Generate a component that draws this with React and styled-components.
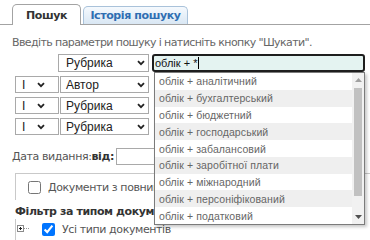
import styled, { createGlobalStyle } from "styled-components";

const GlobalStyle = createGlobalStyle`
  html, body {
    margin: 0;
    padding: 0;
    background: #fff;
  }
  body {
    font-family: "DejaVu Sans", Verdana, sans-serif;
    font-size: 11px;
    letter-spacing: -0.4px;
    overflow: hidden;
  }
`;

const Page = styled.div`
  position: relative;
  width: 370px;
  height: 240px;
  overflow: hidden;
  padding-top: 4px;
  box-sizing: border-box;
`;

const TabBar = styled.div`
  display: flex;
  align-items: flex-end;
  gap: 2px;
  height: 20px;
  padding-left: 12px;
  border-bottom: 1px solid #a3a3a3;
`;

const Tab = styled.div`
  box-sizing: border-box;
  display: flex;
  align-items: center;
  justify-content: center;
  width: ${(p) => p.$w}px;
  height: ${(p) => (p.$active ? 21 : 18)}px;
  margin-bottom: ${(p) => (p.$active ? -1 : 0)}px;
  border: 1px solid ${(p) => (p.$active ? "#a3a3a3" : "#a9c2da")};
  border-bottom: none;
  border-radius: 5px 5px 0 0;
  background: ${(p) =>
    p.$active ? "#fff" : "linear-gradient(#f5f9fd, #d9e7f4)"};
  color: ${(p) => (p.$active ? "#333" : "#2f6eb2")};
  font-weight: bold;
  font-size: 11px;
  padding-top: ${(p) => (p.$active ? 1 : 0)}px;
`;

const Hint = styled.div`
  margin: 11px 0 0 12px;
  line-height: 14px;
  letter-spacing: -0.6px;
  color: #666;
  white-space: nowrap;
`;

const Form = styled.div`
  display: flex;
  flex-direction: column;
  gap: 4px;
  margin-top: 4px;
`;

const Row = styled.div`
  display: flex;
  padding-left: 15px;
  height: ${(p) => (p.$first ? 18 : 17)}px;
`;

const Spacer = styled.div`
  width: ${(p) => p.$w}px;
  flex: none;
`;

const SelectBox = styled.div`
  box-sizing: border-box;
  display: flex;
  align-items: center;
  justify-content: space-between;
  flex: none;
  width: ${(p) => p.$w}px;
  height: 100%;
  margin-left: ${(p) => p.$ml || 0}px;
  padding: 0 ${(p) => p.$pr}px 0 ${(p) => p.$pl}px;
  border: 1px solid #a9a9a9;
  background: #fff;
  font-family: "Liberation Sans", Arial, sans-serif;
  font-size: 12px;
  letter-spacing: 0;
  color: #222;
`;

const Chevron = () => (
  <svg width="8" height="6" viewBox="0 0 8 6">
    <path d="M1 1.2 L4 4.2 L7 1.2" fill="none" stroke="#222" strokeWidth="1.8" />
  </svg>
);

const InputCell = styled.div`
  position: relative;
  flex: none;
  width: 213px;
  margin-left: 3px;
  height: 100%;
`;

const SearchInput = styled.div`
  box-sizing: border-box;
  display: flex;
  align-items: center;
  height: 100%;
  padding-left: 1px;
  border: 2px solid #1e1e1e;
  border-radius: 3px;
  background: #e4f3f1;
  font-family: "Liberation Sans", Arial, sans-serif;
  font-size: 11px;
  letter-spacing: 0;
  color: #111;
`;

const Caret = styled.span`
  display: inline-block;
  width: 1px;
  height: 12px;
  margin-left: 1px;
  background: #000;
`;

const PlainInput = styled.div`
  box-sizing: border-box;
  height: 100%;
  margin-left: 5px;
  border: 1px solid #a9a9a9;
  background: #fff;
`;

const DropList = styled.div`
  position: absolute;
  top: 100%;
  left: 2px;
  z-index: 2;
  box-sizing: border-box;
  display: flex;
  width: 211px;
  height: 153px;
  border: 1px solid #7b7b7b;
  background: #fff;
  box-shadow: 2px 2px 3px rgba(0, 0, 0, 0.22);
`;

const Items = styled.div`
  display: flex;
  flex-direction: column;
  flex: 1;
`;

const Item = styled.div`
  flex: 1;
  display: flex;
  align-items: center;
  padding-left: 4px;
  background: ${(p) => (p.$alt ? "#efefef" : "#fff")};
  font-family: "Liberation Sans", Arial, sans-serif;
  font-size: 10.5px;
  letter-spacing: 0.1px;
  color: #666;
  white-space: nowrap;
`;

const Scrollbar = styled.div`
  display: flex;
  flex-direction: column;
  align-items: center;
  width: 12px;
  background: #f1f1f1;
`;

const ScrollArrow = styled.div`
  display: flex;
  align-items: center;
  justify-content: center;
  height: 14px;
`;

const Track = styled.div`
  flex: 1;
`;

const Thumb = styled.div`
  width: 8px;
  margin-top: 1px;
  height: ${(p) => p.$h}px;
  background: #c1c1c1;
`;

const DateRow = styled.div`
  display: flex;
  align-items: center;
  height: 17px;
  margin-top: 13px;
  padding-left: 12px;
  color: #555;
`;

const Bold = styled.b`
  color: #333;
`;

const DateInput = styled.div`
  box-sizing: border-box;
  width: 200px;
  height: 17px;
  margin-left: 2px;
  border: 1px solid #a9a9a9;
`;

const Panel = styled.div`
  display: flex;
  align-items: center;
  margin: 8px 0 0 15px;
  padding: 7px 0 6px 12px;
  border-top: 1px solid #c9c9c9;
  border-left: 1px solid #c9c9c9;
  color: #555;
  white-space: nowrap;
`;

/* text that runs under the open suggestion list is cut where the list begins */
const Clip = styled.span`
  display: block;
  width: ${(p) => p.$w}px;
  overflow: hidden;
  white-space: nowrap;
`;

const Check = styled.input`
  width: 13px;
  height: 13px;
  margin: 0 ${(p) => p.$mr}px 0 ${(p) => p.$ml || 0}px;
  flex: none;
`;

const Heading = styled.div`
  margin: 5px 0 0 15px;
  line-height: 14px;
  font-weight: bold;
  color: #333;
`;

const FilterPanel = styled.div`
  display: flex;
  align-items: center;
  margin-left: 15px;
  padding: 4px 0 10px 1px;
  border-left: 1px solid #c9c9c9;
  color: #555;
  white-space: nowrap;
`;

const Expander = () => (
  <svg width="24" height="13" viewBox="0 0 24 13">
    <rect x="0.5" y="2.5" width="6" height="6" fill="#fff" stroke="#8a8a8a" />
    <path d="M2 5.5 H5 M3.5 4 V7" stroke="#222" strokeWidth="1" />
    <path d="M7 5.5 H12" stroke="#999" strokeDasharray="1 1" />
  </svg>
);

const suggestions = [
  "аналітичний",
  "бухгалтерський",
  "бюджетний",
  "господарський",
  "забалансовий",
  "заробітної плати",
  "міжнародний",
  "персоніфікований",
  "податковий",
];

const rows = [
  { op: "І", field: "Автор" },
  { op: "І", field: "Рубрика" },
  { op: "І", field: "Рубрика" },
];

export default function App() {
  return (
    <Page>
      <GlobalStyle />
      <TabBar>
        <Tab $active $w={69}>Пошук</Tab>
        <Tab $w={105}>Історія пошуку</Tab>
      </TabBar>
      <Hint>Введіть параметри пошуку і натисніть кнопку "Шукати".</Hint>
      <Form>
        <Row $first>
          <Spacer $w={43} />
          <SelectBox $w={91} $pl={7} $pr={3}>
            Рубрика
            <Chevron />
          </SelectBox>
          <InputCell>
            <SearchInput>
              облік + *<Caret />
            </SearchInput>
            <DropList>
              <Items>
                {suggestions.map((s, i) => (
                  <Item key={s} $alt={i % 2 === 1}>
                    облік + {s}
                  </Item>
                ))}
              </Items>
              <Scrollbar>
                <ScrollArrow>
                  <svg width="7" height="4" viewBox="0 0 7 4">
                    <path d="M0 4 L3.5 0 L7 4 Z" fill="#a0a0a0" />
                  </svg>
                </ScrollArrow>
                <Track>
                  <Thumb $h={108} />
                </Track>
                <ScrollArrow>
                  <svg width="7" height="4" viewBox="0 0 7 4">
                    <path d="M0 0 L3.5 4 L7 0 Z" fill="#505050" />
                  </svg>
                </ScrollArrow>
              </Scrollbar>
            </DropList>
          </InputCell>
        </Row>
        {rows.map((r, i) => (
          <Row key={i}>
            <SelectBox $w={44} $pl={6} $pr={13}>
              {r.op}
              <Chevron />
            </SelectBox>
            <SelectBox $w={89} $ml={1} $pl={5} $pr={3}>
              {r.field}
              <Chevron />
            </SelectBox>
            <InputCell>
              <PlainInput />
            </InputCell>
          </Row>
        ))}
      </Form>
      <DateRow>
        Дата видання:<Bold>від:</Bold>
        <DateInput />
      </DateRow>
      <Panel>
        <Check type="checkbox" $mr={7} readOnly />
        <Clip $w={106}>Документи з повним текстом</Clip>
      </Panel>
      <Heading>
        <Clip $w={139}>Фільтр за типом документів</Clip>
      </Heading>
      <FilterPanel>
        <Expander />
        <Check type="checkbox" $ml={1} $mr={7} defaultChecked />
        Усі типи документів
      </FilterPanel>
    </Page>
  );
}
